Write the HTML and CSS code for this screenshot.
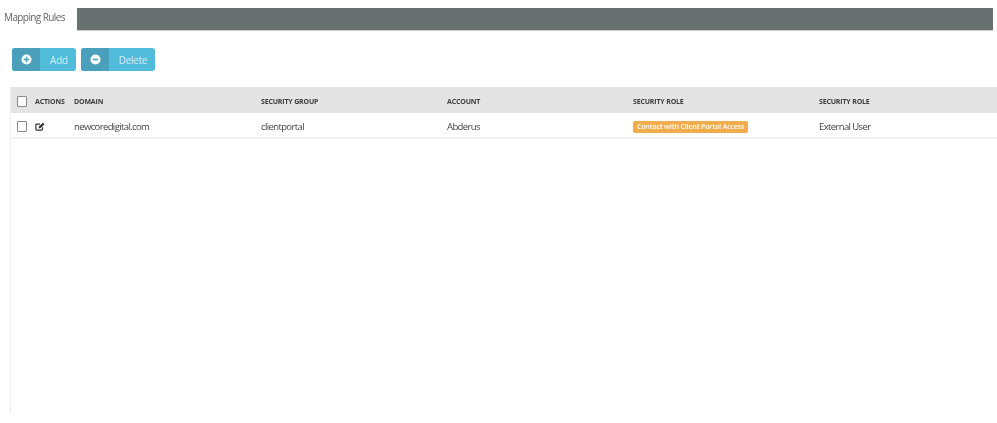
FILE: index.html
```html
<!DOCTYPE html>
<html lang="en">
<head>
<meta charset="utf-8">
<title>Mapping Rules</title>
<link rel="stylesheet" href="styles.css">
</head>
<body>
<div class="page">
  <div class="tabs">
    <div class="tab">Mapping Rules</div>
    <div class="tab-bar"></div>
  </div>
  <div class="toolbar">
    <button class="btn btn-add" type="button">
      <span class="btn-icon"><svg width="11" height="11" viewBox="0 0 12 12"><circle cx="6" cy="6" r="5.5" fill="#fff"/><path d="M6 3v6M3 6h6" stroke="#4a9fbb" stroke-width="1.6"/></svg></span>
      <span class="btn-label">Add</span>
    </button>
    <button class="btn btn-delete" type="button">
      <span class="btn-icon"><svg width="11" height="11" viewBox="0 0 12 12"><circle cx="6" cy="6" r="5.5" fill="#fff"/><path d="M3 6h6" stroke="#4a9fbb" stroke-width="1.8"/></svg></span>
      <span class="btn-label">Delete</span>
    </button>
  </div>
  <div class="grid">
    <div class="row head">
      <div class="c-check"><span class="checkbox"></span></div>
      <div class="c-actions">ACTIONS</div>
      <div class="c-domain">DOMAIN</div>
      <div class="c-group">SECURITY GROUP</div>
      <div class="c-account">ACCOUNT</div>
      <div class="c-role">SECURITY ROLE</div>
      <div class="c-role2">SECURITY ROLE</div>
    </div>
    <div class="row body">
      <div class="c-check"><span class="checkbox"></span></div>
      <div class="c-actions"><svg class="edit" width="10" height="9" viewBox="0 0 12 11"><path d="M9 6.5V9a1 1 0 0 1-1 1H2a1 1 0 0 1-1-1V3.500a1 1 0 0 1 1-1h4" fill="none" stroke="#333" stroke-width="1.500"/><path d="M4.500 7.500V5.500L9.500 .8l2 2L6.500 7.500z" fill="#333"/></svg></div>
      <div class="c-domain">newcoredigital.com</div>
      <div class="c-group">clientportal</div>
      <div class="c-account">Abderus</div>
      <div class="c-role"><span class="badge">Contact with Client Portal Access</span></div>
      <div class="c-role2">External User</div>
    </div>
  </div>
</div>
</body>
</html>
```
FILE: styles.css
```css
html, body {
  margin: 0;
  padding: 0;
  background: #fff;
}
.page {
  width: 997px;
  height: 423px;
  overflow: hidden;
  font-family: "Open Sans", "Liberation Sans", sans-serif;
  color: #555;
  box-sizing: border-box;
  padding-top: 8px;
  filter: blur(0.4px);
}
.tabs {
  display: flex;
  height: 23px;
  padding-right: 4px;
}
.tab {
  width: 77px;
  box-sizing: border-box;
  padding: 2px 0 0 4px;
  font-size: 10px;
  line-height: 14px;
  letter-spacing: -0.6px;
  color: #666;
  white-space: nowrap;
}
.tab-bar {
  flex: 1;
  height: 22px;
  background: #697070;
  box-shadow: 0 1px 0 #c9cccc;
}
.toolbar {
  display: flex;
  gap: 5px;
  margin: 17px 0 0 12px;
  height: 23px;
}
.btn {
  display: flex;
  align-items: stretch;
  padding: 0;
  border: 0;
  border-radius: 3px;
  overflow: hidden;
  background: #50bcd9;
  font-family: inherit;
  height: 23px;
}
.btn-icon {
  width: 28px;
  display: flex;
  align-items: center;
  justify-content: center;
  background: #4a9fbb;
}
.btn-label {
  display: flex;
  align-items: center;
  justify-content: center;
  color: #d6eff6;
  font-size: 10px;
  letter-spacing: -0.25px;
}
.btn-add .btn-label { width: 36px; padding-left: 2px; box-sizing: border-box; }
.btn-delete .btn-label { width: 46px; padding-left: 2px; box-sizing: border-box; }
.grid {
  margin: 16px 0 0 10px;
  height: 326px;
  border-left: 1px solid #eeeeee;
}
.row {
  display: grid;
  grid-template-columns: 24px 39px 187px 186px 186px 186px 1fr;
  align-items: center;
}
.row > div { white-space: nowrap; }
.head {
  height: 26px;
  box-sizing: border-box;
  padding-top: 2px;
  background: #e4e4e4;
  font-size: 7px;
  font-weight: 700;
  color: #3c3c3c;
  letter-spacing: -0.17px;
}
.body {
  height: 26px;
  box-sizing: border-box;
  padding-top: 2px;
  border-bottom: 2px solid #f1f1f1;
  font-size: 9.5px;
  letter-spacing: -0.62px;
  color: #444;
}
.c-check {
  display: flex;
  padding-left: 6px;
}
.checkbox {
  display: block;
  width: 8px;
  height: 9px;
  border: 1px solid #8a8a8a;
  border-radius: 1px;
  background: #fff;
}
.edit { display: block; }
.badge {
  display: inline-block;
  background: #f0ad4e;
  color: #fdf1dd;
  font-size: 7px;
  font-weight: 700;
  line-height: 12px;
  padding: 0 4px;
  border-radius: 2px;
  letter-spacing: -0.25px;
}
```
